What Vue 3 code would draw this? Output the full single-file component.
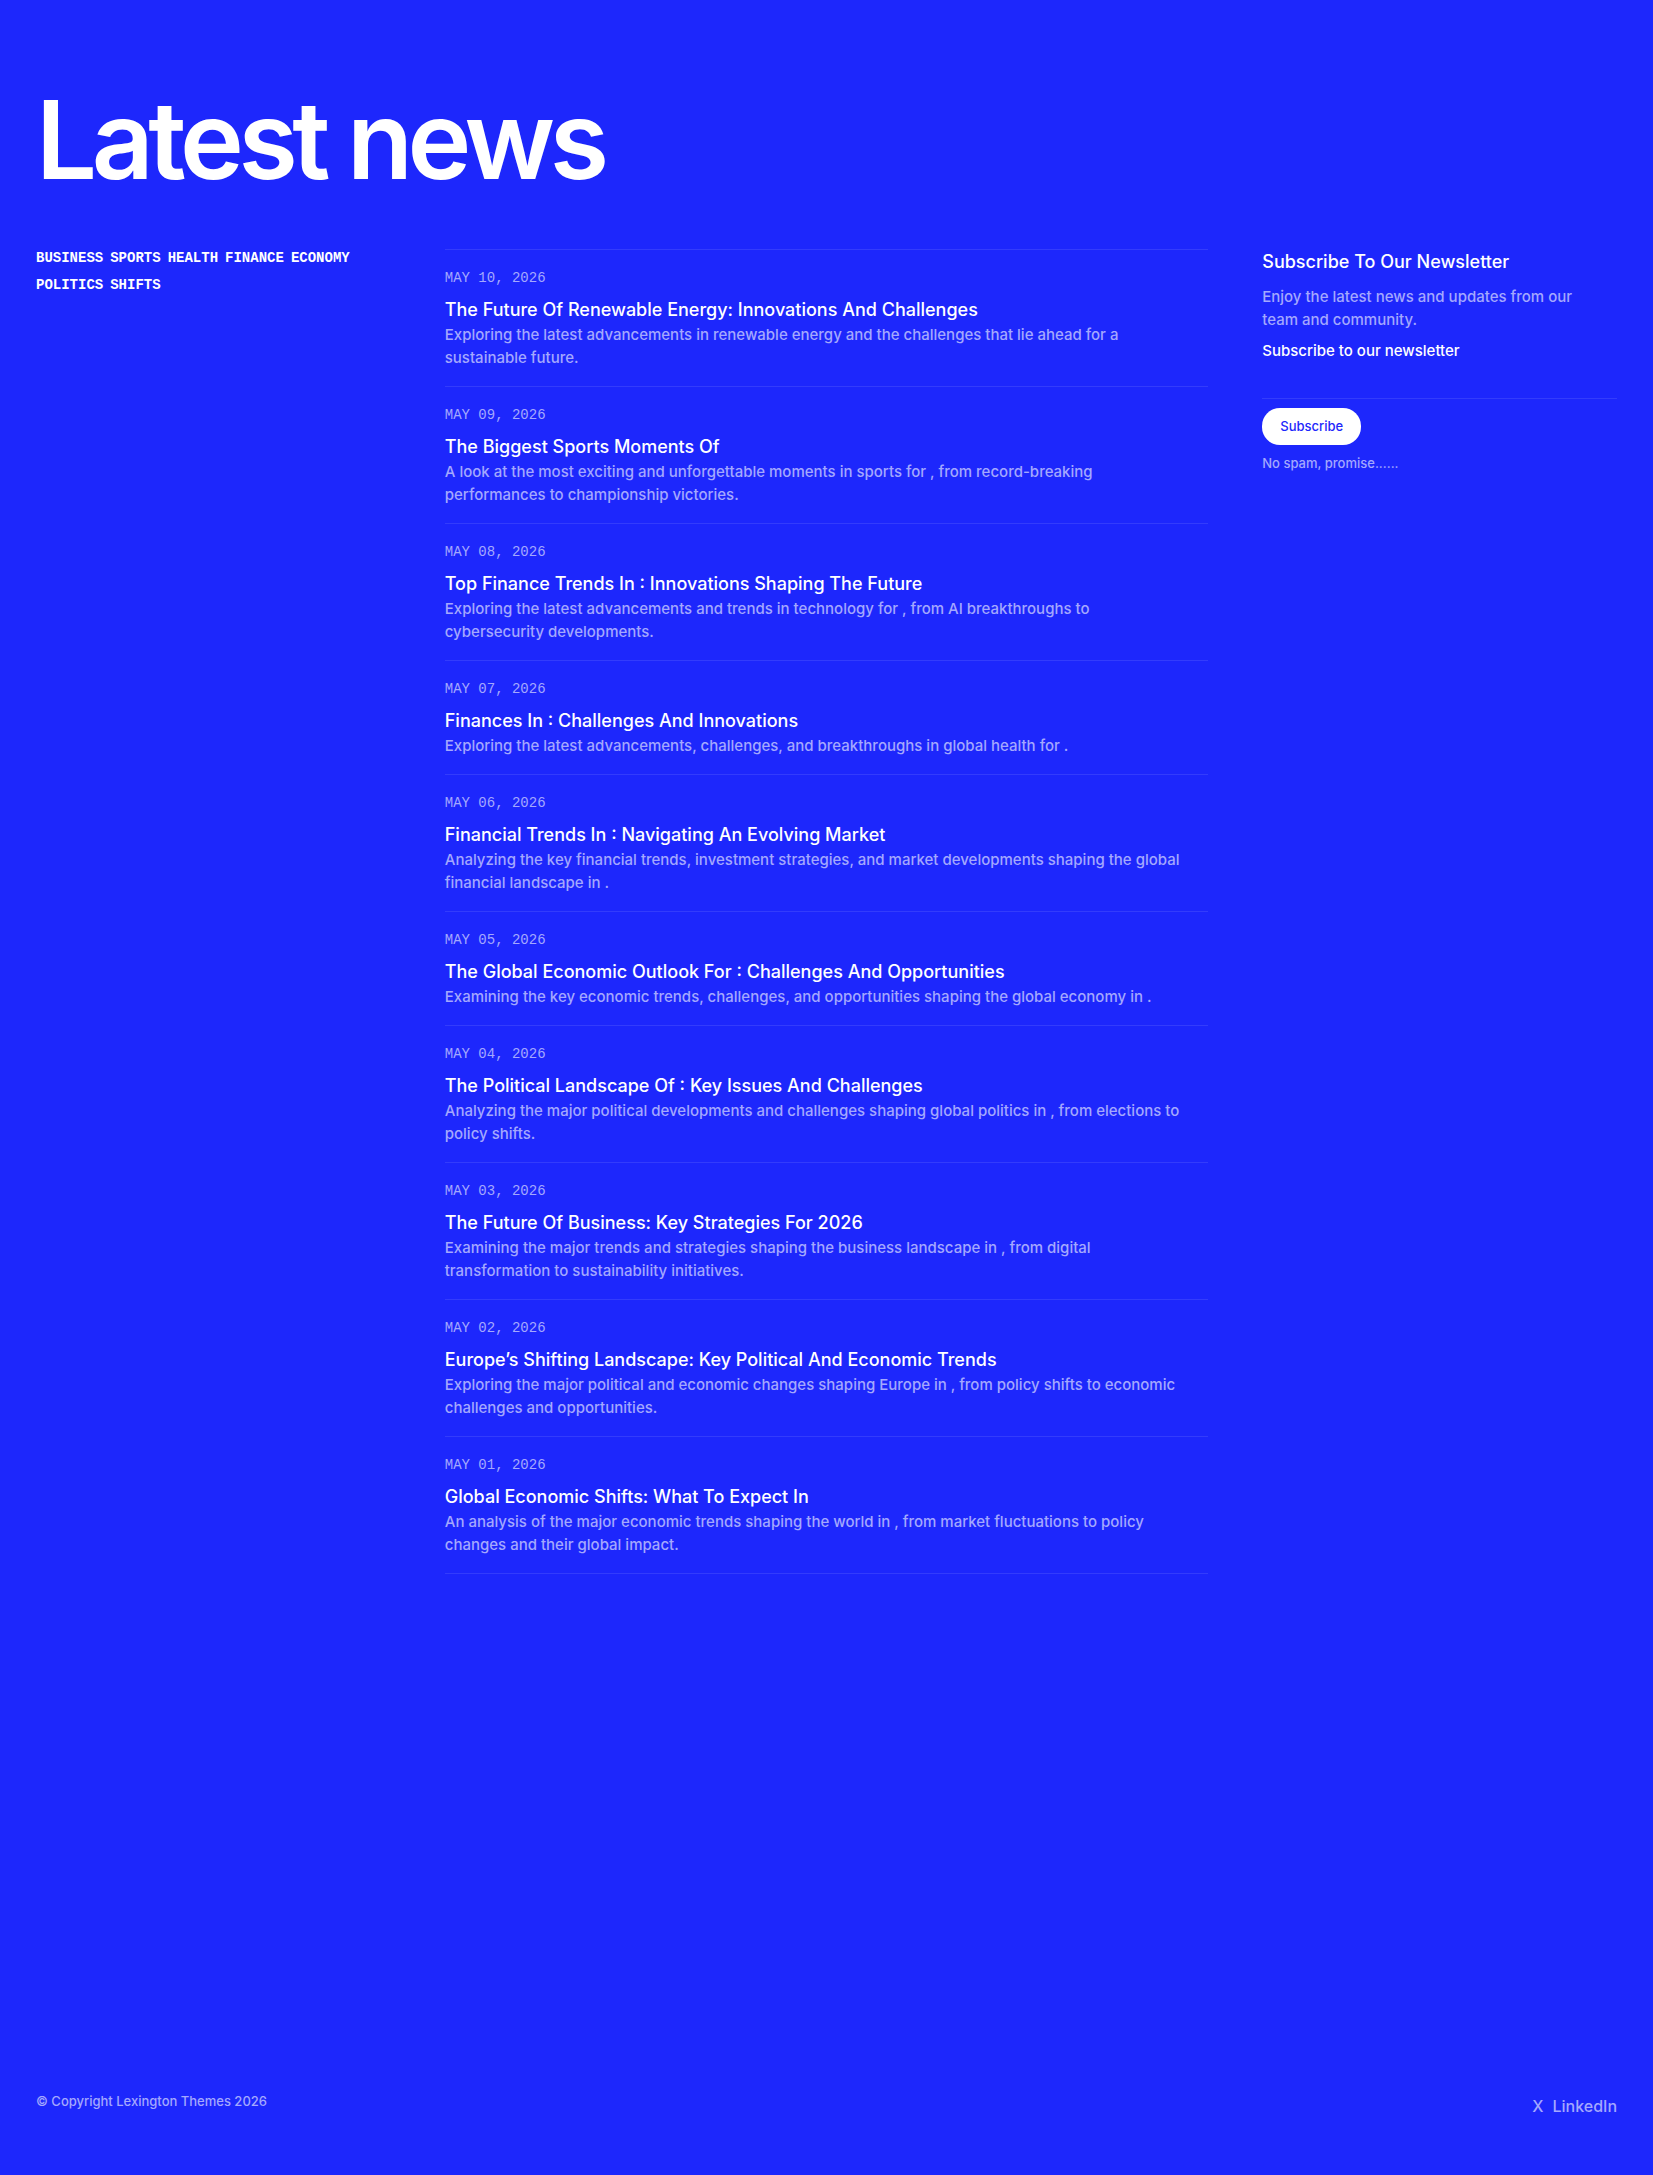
<template>
  <div class="page">
    <main class="content">
      <h1>Latest news</h1>
      <div class="columns">
        <nav class="categories" aria-label="Categories">
          <a v-for="category in categories" :key="category" href="#">{{ category }}</a>
        </nav>

        <ul class="posts">
          <li v-for="post in posts" :key="post.date">
            <a class="post" href="#">
              <time>{{ post.date }}</time>
              <h2>{{ post.title }}</h2>
              <p>{{ post.text }}</p>
            </a>
          </li>
        </ul>

        <aside class="newsletter">
          <h2>Subscribe To Our Newsletter</h2>
          <p class="intro">Enjoy the latest news and updates from our team and community.</p>
          <form @submit.prevent>
            <label for="email">Subscribe to our newsletter</label>
            <input id="email" v-model="email" type="email" />
            <button type="submit">Subscribe</button>
            <small>No spam, promise......</small>
          </form>
        </aside>
      </div>
    </main>

    <footer class="footer">
      <p>© Copyright Lexington Themes 2026</p>
      <div class="social">
        <a href="#">X</a>
        <a href="#">LinkedIn</a>
      </div>
    </footer>
  </div>
</template>

<script setup>
import { ref } from 'vue';

const email = ref('');

const categories = ['business', 'sports', 'health', 'finance', 'economy', 'politics', 'shifts'];

const posts = [
  {
    date: 'May 10, 2026',
    title: 'The Future Of Renewable Energy: Innovations And Challenges',
    text: 'Exploring the latest advancements in renewable energy and the challenges that lie ahead for a sustainable future.',
  },
  {
    date: 'May 09, 2026',
    title: 'The Biggest Sports Moments Of',
    text: 'A look at the most exciting and unforgettable moments in sports for , from record-breaking performances to championship victories.',
  },
  {
    date: 'May 08, 2026',
    title: 'Top Finance Trends In : Innovations Shaping The Future',
    text: 'Exploring the latest advancements and trends in technology for , from AI breakthroughs to cybersecurity developments.',
  },
  {
    date: 'May 07, 2026',
    title: 'Finances In : Challenges And Innovations',
    text: 'Exploring the latest advancements, challenges, and breakthroughs in global health for .',
  },
  {
    date: 'May 06, 2026',
    title: 'Financial Trends In : Navigating An Evolving Market',
    text: 'Analyzing the key financial trends, investment strategies, and market developments shaping the global financial landscape in .',
  },
  {
    date: 'May 05, 2026',
    title: 'The Global Economic Outlook For : Challenges And Opportunities',
    text: 'Examining the key economic trends, challenges, and opportunities shaping the global economy in .',
  },
  {
    date: 'May 04, 2026',
    title: 'The Political Landscape Of : Key Issues And Challenges',
    text: 'Analyzing the major political developments and challenges shaping global politics in , from elections to policy shifts.',
  },
  {
    date: 'May 03, 2026',
    title: 'The Future Of Business: Key Strategies For 2026',
    text: 'Examining the major trends and strategies shaping the business landscape in , from digital transformation to sustainability initiatives.',
  },
  {
    date: 'May 02, 2026',
    title: 'Europe’s Shifting Landscape: Key Political And Economic Trends',
    text: 'Exploring the major political and economic changes shaping Europe in , from policy shifts to economic challenges and opportunities.',
  },
  {
    date: 'May 01, 2026',
    title: 'Global Economic Shifts: What To Expect In',
    text: 'An analysis of the major economic trends shaping the world in , from market fluctuations to policy changes and their global impact.',
  },
];
</script>

<style>
body {
  margin: 0;
  background: #1d27fc;
}
</style>

<style scoped>
.page {
  box-sizing: border-box;
  min-height: 100vh;
  padding: 80px 36px 54px;
  display: flex;
  flex-direction: column;
  justify-content: space-between;
  gap: 64px;
  color: #ffffff;
  font-family: Inter, 'Liberation Sans', sans-serif;
  font-size: 15px;
  font-weight: 500;
  line-height: 23px;
}

h1,
h2,
p,
ul {
  margin: 0;
  padding: 0;
}

a {
  color: inherit;
  text-decoration: none;
}

h1 {
  font-size: 108px;
  font-weight: 600;
  line-height: 120px;
  letter-spacing: -0.05em;
}

h2 {
  font-size: 18px;
  font-weight: 500;
  line-height: 26px;
}

.columns {
  display: grid;
  grid-template-columns: repeat(4, minmax(0, 1fr));
  gap: 54px;
  align-items: start;
  margin-top: 49px;
}

/* Categories */
.categories {
  display: flex;
  flex-wrap: wrap;
  column-gap: 7px;
}

.categories a,
time {
  font-family: 'Liberation Mono', monospace;
  font-size: 14px;
  text-transform: uppercase;
}

.categories a {
  font-weight: 700;
  line-height: 19px;
  padding-bottom: 8px;
}

/* Post list */
.posts {
  grid-column: span 2;
  list-style: none;
  border-top: 1px solid #333cfc;
}

.posts li {
  border-bottom: 1px solid #333cfc;
}

.post {
  display: block;
  padding: 19px 0 17px;
}

.post p,
.intro {
  padding-right: 22px;
}

time {
  display: block;
  line-height: 18px;
  margin-bottom: 10px;
}

time,
.post p,
.intro,
small,
.footer {
  color: #a4a8fe;
}

/* Newsletter */
.newsletter form {
  display: flex;
  flex-direction: column;
  align-items: flex-start;
  margin-top: 8px;
}

.newsletter .intro {
  margin-top: 10px;
}

.newsletter input {
  box-sizing: border-box;
  width: 100%;
  height: 37px;
  padding: 0;
  border: 0;
  border-bottom: 1px solid #333cfc;
  outline: none;
  background: transparent;
  color: inherit;
  font: inherit;
}

.newsletter button {
  height: 37px;
  margin-top: 9px;
  padding: 0 18px;
  border: 0;
  border-radius: 18px;
  background: #ffffff;
  color: #1d27fc;
  font: inherit;
  font-size: 13px;
  cursor: pointer;
}

small {
  margin-top: 8px;
  font-size: 13px;
  line-height: 20px;
}

/* Footer */
.footer {
  display: flex;
  justify-content: space-between;
  align-items: flex-start;
}

.footer p {
  font-size: 13px;
  line-height: 18px;
}

.social {
  display: flex;
  gap: 9px;
  font-size: 16px;
  line-height: 29px;
}
</style>
